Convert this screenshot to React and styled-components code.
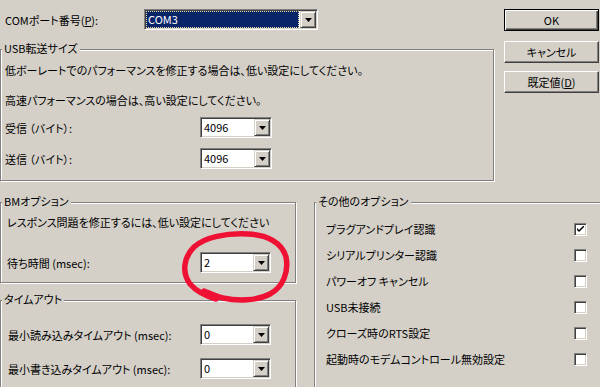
import React from 'react';
import styled, { createGlobalStyle, css } from 'styled-components';

const FONT = `"Noto Sans CJK JP", "Liberation Sans", sans-serif`;

const Global = createGlobalStyle`
  html, body { margin: 0; padding: 0; background: #d4d0c8; }
  body { width: 600px; height: 387px; overflow: hidden; }
`;

const Dialog = styled.div`
  position: relative;
  width: 600px;
  height: 387px;
  overflow: hidden;
  background: #d4d0c8;
  font-family: ${FONT};
  font-size: 11px;
  color: #000;
  font-feature-settings: "palt";
  display: flex;
  flex-direction: column;
`;

const TopSection = styled.div`
  display: grid;
  grid-template-columns: 494px 95px;
  column-gap: 10px;
  align-items: start;
`;

const Column = styled.div`
  display: flex;
  flex-direction: column;
`;

const ComRow = styled.div`
  display: flex;
  align-items: center;
  height: 21px;
  margin-top: 9px;
  padding-left: 5px;
`;

const Label = styled.span`
  width: ${p => p.$w}px;
  flex: none;
  white-space: nowrap;
  line-height: 16px;
`;

const U = styled.span`
  text-decoration: underline;
`;

const Group = styled.div`
  position: relative;
  box-sizing: border-box;
  width: ${p => p.$w}px;
  margin-top: ${p => p.$mt || 0}px;
  padding: ${p => p.$pad};
  border: 1px solid #808080;
  box-shadow: inset 1px 1px 0 #fff, 1px 1px 0 #fff;
  display: flex;
  flex-direction: column;
`;

const GroupTitle = styled.span`
  position: absolute;
  top: -10px;
  left: 1px;
  padding: 0 2px 0 2px;
  background: #d4d0c8;
  line-height: 16px;
  white-space: nowrap;
`;

const TextLine = styled.div`
  height: 16px;
  line-height: 16px;
  margin-top: ${p => p.$mt || 0}px;
  white-space: nowrap;
`;

const FieldRow = styled.div`
  display: flex;
  align-items: center;
  height: 21px;
  margin-top: ${p => p.$mt || 0}px;
`;

const ComboBox = styled.div`
  box-sizing: border-box;
  width: ${p => p.$w}px;
  height: 21px;
  flex: none;
  display: flex;
  align-items: stretch;
  border: 1px solid;
  border-color: #808080 #fff #fff #808080;
  box-shadow: inset 1px 1px 0 #404040, inset -1px -1px 0 #d4d0c8;
  background: #fff;
  padding: 1px;
`;

const ComboValue = styled.div`
  flex: 1;
  display: flex;
  align-items: center;
  padding-left: 2px;
  margin-right: 1px;
  line-height: 15px;
  ${p => p.$selected && css`
    background: #0a246a;
    color: #fff;
    outline: 1px dotted #e8dfa0;
    outline-offset: -1px;
  `}
`;

const DropButton = styled.div`
  width: 16px;
  flex: none;
  box-sizing: border-box;
  background: #d4d0c8;
  border: 1px solid;
  border-color: #d4d0c8 #404040 #404040 #d4d0c8;
  box-shadow: inset 1px 1px 0 #fff, inset -1px -1px 0 #808080;
  display: flex;
  align-items: center;
  justify-content: center;
`;

const ButtonColumn = styled.div`
  display: flex;
  flex-direction: column;
`;

const PushButton = styled.button`
  box-sizing: border-box;
  width: 95px;
  height: 22px;
  margin-top: ${p => p.$mt}px;
  padding: 0;
  font-family: ${FONT};
  font-size: 11px;
  font-feature-settings: "palt";
  color: #000;
  background: #d4d0c8;
  border: 1px solid;
  border-color: #fff #404040 #404040 #fff;
  box-shadow: inset -1px -1px 0 #808080;
  ${p => p.$default && css`
    border-color: #000;
    box-shadow: inset 1px 1px 0 #fff, inset -1px -1px 0 #404040, inset -2px -2px 0 #808080;
  `}
`;

const BottomSection = styled.div`
  display: grid;
  grid-template-columns: 296px 296px;
  column-gap: 18px;
  margin-top: 21px;
  align-items: start;
`;

const OptionRow = styled.div`
  display: grid;
  grid-template-columns: 248px 13px;
  align-items: center;
  height: 26px;
`;

const CheckBox = styled.span`
  box-sizing: border-box;
  width: 13px;
  height: 13px;
  border: 1px solid;
  border-color: #808080 #fff #fff #808080;
  box-shadow: inset 1px 1px 0 #404040, inset -1px -1px 0 #d4d0c8;
  background: #fff;
  display: flex;
  align-items: center;
  justify-content: center;
`;

const Overlay = styled.svg`
  position: absolute;
  left: 0;
  top: 0;
  pointer-events: none;
`;

const Arrow = () => (
  <svg width="7" height="4" viewBox="0 0 7 4">
    <polygon points="0,0 7,0 3.5,4" fill="#000" />
  </svg>
);

const Combo = ({ w, value, selected }) => (
  <ComboBox $w={w}>
    <ComboValue $selected={selected}>{value}</ComboValue>
    <DropButton><Arrow /></DropButton>
  </ComboBox>
);

const Check = ({ checked }) => (
  <CheckBox>
    {checked && (
      <svg width="7" height="7" viewBox="0 0 7 7">
        <path d="M0 2 L0 4 L2 6 L7 1 L7 -1 L2 4 Z" fill="#000" />
      </svg>
    )}
  </CheckBox>
);

const options = [
  { label: 'プラグアンドプレイ認識', checked: true },
  { label: 'シリアルプリンター認識', checked: false },
  { label: 'パワーオフ キャンセル', checked: false },
  { label: 'USB未接続', checked: false },
  { label: 'クローズ時のRTS設定', checked: false },
  { label: '起動時のモデムコントロール無効設定', checked: false },
];

export default function App() {
  return (
    <>
      <Global />
      <Dialog>
        <TopSection>
          <Column>
            <ComRow>
              <Label $w={139}>COMポート番号(<U>P</U>):</Label>
              <Combo w={174} value="COM3" selected />
            </ComRow>
            <Group $w={494} $mt={19} $pad="12px 4px 11px 4px">
              <GroupTitle>USB転送サイズ</GroupTitle>
              <TextLine>低ボーレートでのパフォーマンスを修正する場合は、低い設定にしてください。</TextLine>
              <TextLine $mt={14}>高速パフォーマンスの場合は、高い設定にしてください。</TextLine>
              <FieldRow $mt={9}>
                <Label $w={195}>受信 （バイト）:</Label>
                <Combo w={72} value="4096" />
              </FieldRow>
              <FieldRow $mt={10}>
                <Label $w={195}>送信 （バイト）:</Label>
                <Combo w={72} value="4096" />
              </FieldRow>
            </Group>
          </Column>
          <ButtonColumn>
            <PushButton $mt={9} $default>OK</PushButton>
            <PushButton $mt={10}>キャンセル</PushButton>
            <PushButton $mt={8}>既定値(<U>D</U>)</PushButton>
          </ButtonColumn>
        </TopSection>

        <BottomSection>
          <Column>
            <Group $w={296} $pad="11px 6px 9px 6px">
              <GroupTitle>BMオプション</GroupTitle>
              <TextLine>レスポンス問題を修正するには、低い設定にしてください</TextLine>
              <FieldRow $mt={22}>
                <Label $w={193}>待ち時間 (msec):</Label>
                <Combo w={71} value="2" />
              </FieldRow>
            </Group>
            <Group $w={296} $mt={17} $pad="23px 7px 10px 7px">
              <GroupTitle>タイムアウト</GroupTitle>
              <FieldRow>
                <Label $w={192}>最小読み込みタイムアウト (msec):</Label>
                <Combo w={71} value="0" />
              </FieldRow>
              <FieldRow $mt={13}>
                <Label $w={192}>最小書き込みタイムアウト (msec):</Label>
                <Combo w={71} value="0" />
              </FieldRow>
            </Group>
          </Column>
          <Column>
            <Group $w={296} $pad="13px 0 20px 11px">
              <GroupTitle>その他のオプション</GroupTitle>
              {options.map(o => (
                <OptionRow key={o.label}>
                  <Label>{o.label}</Label>
                  <Check checked={o.checked} />
                </OptionRow>
              ))}
            </Group>
          </Column>
        </BottomSection>

        <Overlay width="600" height="387" viewBox="0 0 600 387">
          <path
            d="M 216 299 C 206 296, 196 291, 190 284 C 182 273, 183 258, 194 247 C 205 237, 226 233, 248 234 C 268 235, 282 243, 286 257 C 289 272, 283 287, 270 294 C 257 301, 237 301, 223 298 C 215 296, 209 293, 204 291"
            fill="none"
            stroke="#ee1133"
            strokeWidth="5.5"
            strokeLinecap="round"
            strokeLinejoin="round"
          />
        </Overlay>
      </Dialog>
    </>
  );
}
